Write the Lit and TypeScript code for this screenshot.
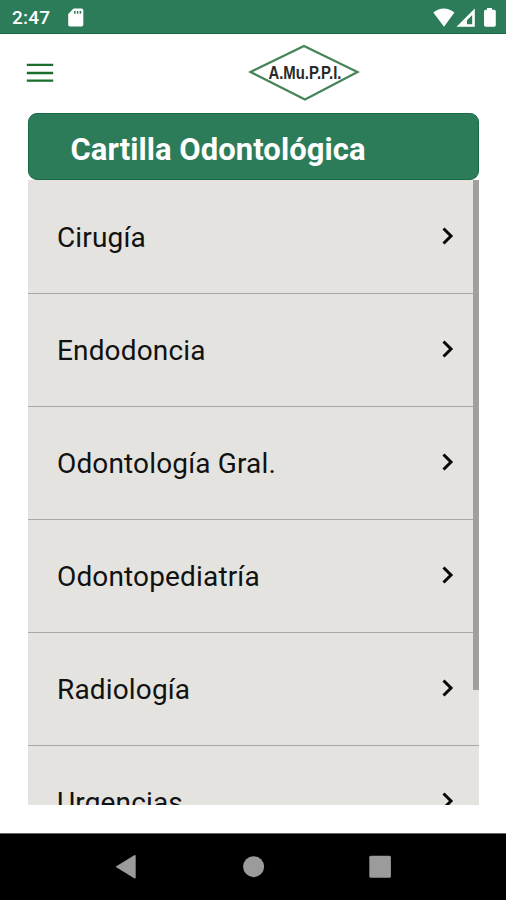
import { LitElement, html, css } from "lit";
import { customElement, property } from "lit/decorators.js";

@customElement("status-bar")
class StatusBar extends LitElement {
  static styles = css`
    :host { display: flex; height: 34px; background: #2d7c59; box-sizing: border-box; border-bottom: 1px solid #176a46; color: #fff; }
    .time { font: 500 19px/36px Roboto, sans-serif; letter-spacing: 0.2px; margin-left: 12px; width: 56px; }
    svg { display: block; }
    .spacer { flex: 1; }
  `;
  render() {
    return html`
      <span class="time">2:47</span>
      <svg width="18" height="34" viewBox="68 0 18 34"><path fill="#fff" d="M73.6 8.5H81.5Q83.3 8.5 83.3 10.3V24.8Q83.3 26.6 81.5 26.6H70Q68.2 26.6 68.2 24.8V14Z"/><path stroke="#2d7c59" stroke-width="1.5" d="M74.8 11V13.8M77.6 11V13.8M80.4 11V13.8"/></svg>
      <span class="spacer"></span>
      <svg width="76" height="34" viewBox="430 0 76 34">
        <path fill="#fff" d="M433.3 12.6Q443.8 4.6 454.4 12.6L444 26.8Z"/>
        <path fill="#fff" fill-rule="evenodd" d="M474.8 8.5V26.8H456.5ZM472.2 15L467 20.3V24.2H472.2Z"/>
        <path fill="#fff" d="M487 8h5v1.8h2.2q1.6 0 1.6 1.6V25q0 1.7-1.6 1.7h-8.5q-1.7 0-1.7-1.7V11.4q0-1.6 1.7-1.6H487Z"/>
      </svg>`;
  }
}

@customElement("app-header")
class AppHeader extends LitElement {
  static styles = css`
    :host { display: flex; height: 79px; align-items: flex-start; background: #fff; }
    .menu { margin: 28px 0 0 26px; }
    .logo { margin: 7px 0 0 194px; }
    svg { display: block; }
    text { font: 700 18px "Liberation Sans", sans-serif; }
  `;
  render() {
    return html`
      <svg class="menu" width="28" height="22" viewBox="0 0 28 22"><path stroke="#1b6d2c" stroke-width="2.3" d="M.8 2.8H27.2M.8 11H27.2M.8 18.6H27.2"/></svg>
      <svg class="logo" width="112" height="64" viewBox="0 0 112 64">
        <path d="M2.5 31L56 5L109.500 31L57 58.5Z" fill="none" stroke="#448458" stroke-width="2.2"/>
        <text x="20.500" y="37.500" fill="#2a2a2a" textLength="73" lengthAdjust="spacingAndGlyphs">A.Mu.P.P.I.</text>
      </svg>`;
  }
}

@customElement("category-row")
class CategoryRow extends LitElement {
  @property() label = "";
  static styles = css`
    :host { display: flex; box-sizing: border-box; flex: none; height: 113px; align-items: center; justify-content: space-between; padding: 2px 24.5px 0 29px; border-bottom: 1px solid #a9a8a5; }
    .label { font: 400 28px/36px Roboto, sans-serif; color: #111; letter-spacing: 0.15px; white-space: nowrap; }
    svg { display: block; margin-top: -3px; }
  `;
  render() {
    return html`<span class="label">${this.label}</span>
      <svg width="14" height="20" viewBox="0 0 14 20"><path d="M2.500 2.500L10 10L2.500 17.500" fill="none" stroke="#080808" stroke-width="3"/></svg>`;
  }
}

@customElement("nav-bar")
class NavBar extends LitElement {
  static styles = css`
    :host { display: flex; box-sizing: border-box; height: 67px; background: #000; border-top: 1px solid #666; justify-content: center; padding: 20px 0 0 2px; }
    svg { display: block; }
  `;
  render() {
    return html`<svg width="280" height="26" viewBox="114 854 280 26">
      <g fill="#9b9b9b"><path d="M115.500 866.700L134.200 855.200Q135.700 854.500 135.700 856V877.600Q135.700 879 134.200 878.200Z"/><circle cx="253.600" cy="866.700" r="10.500"/><rect x="369.300" y="855.700" width="21.600" height="22" rx="1.500"/></g>
    </svg>`;
  }
}

@customElement("app-root")
class AppRoot extends LitElement {
  static styles = css`
    :host { display: flex; flex-direction: column; height: 900px; background: #fff; overflow: hidden; }
    .title { box-sizing: border-box; margin: 0 27px 0 28px; height: 67px; padding-left: 41.5px; border-radius: 9px; border: 1px solid #176a46; background: #2d7c59; color: #fff; font: 700 31px/71px Roboto, sans-serif; letter-spacing: 0.05px; white-space: nowrap; }
    .list { display: flex; margin: 0 27px 0 28px; height: 625px; background: #e4e3df; overflow: hidden; }
    .rows { flex: 1; display: flex; flex-direction: column; margin-right: -6px; padding-top: 0.5px; }
    .thumb { position: relative; width: 6px; height: 510px; background: #a09f9d; }
    .gap { flex: 1; }
  `;
  render() {
    const items = ["Cirugía", "Endodoncia", "Odontología Gral.", "Odontopediatría", "Radiología", "Urgencias"];
    return html`
      <status-bar></status-bar>
      <app-header></app-header>
      <div class="title">Cartilla Odontológica</div>
      <div class="list">
        <div class="rows">${items.map((i) => html`<category-row .label=${i}></category-row>`)}</div>
        <div class="thumb"></div>
      </div>
      <div class="gap"></div>
      <nav-bar></nav-bar>`;
  }
}
